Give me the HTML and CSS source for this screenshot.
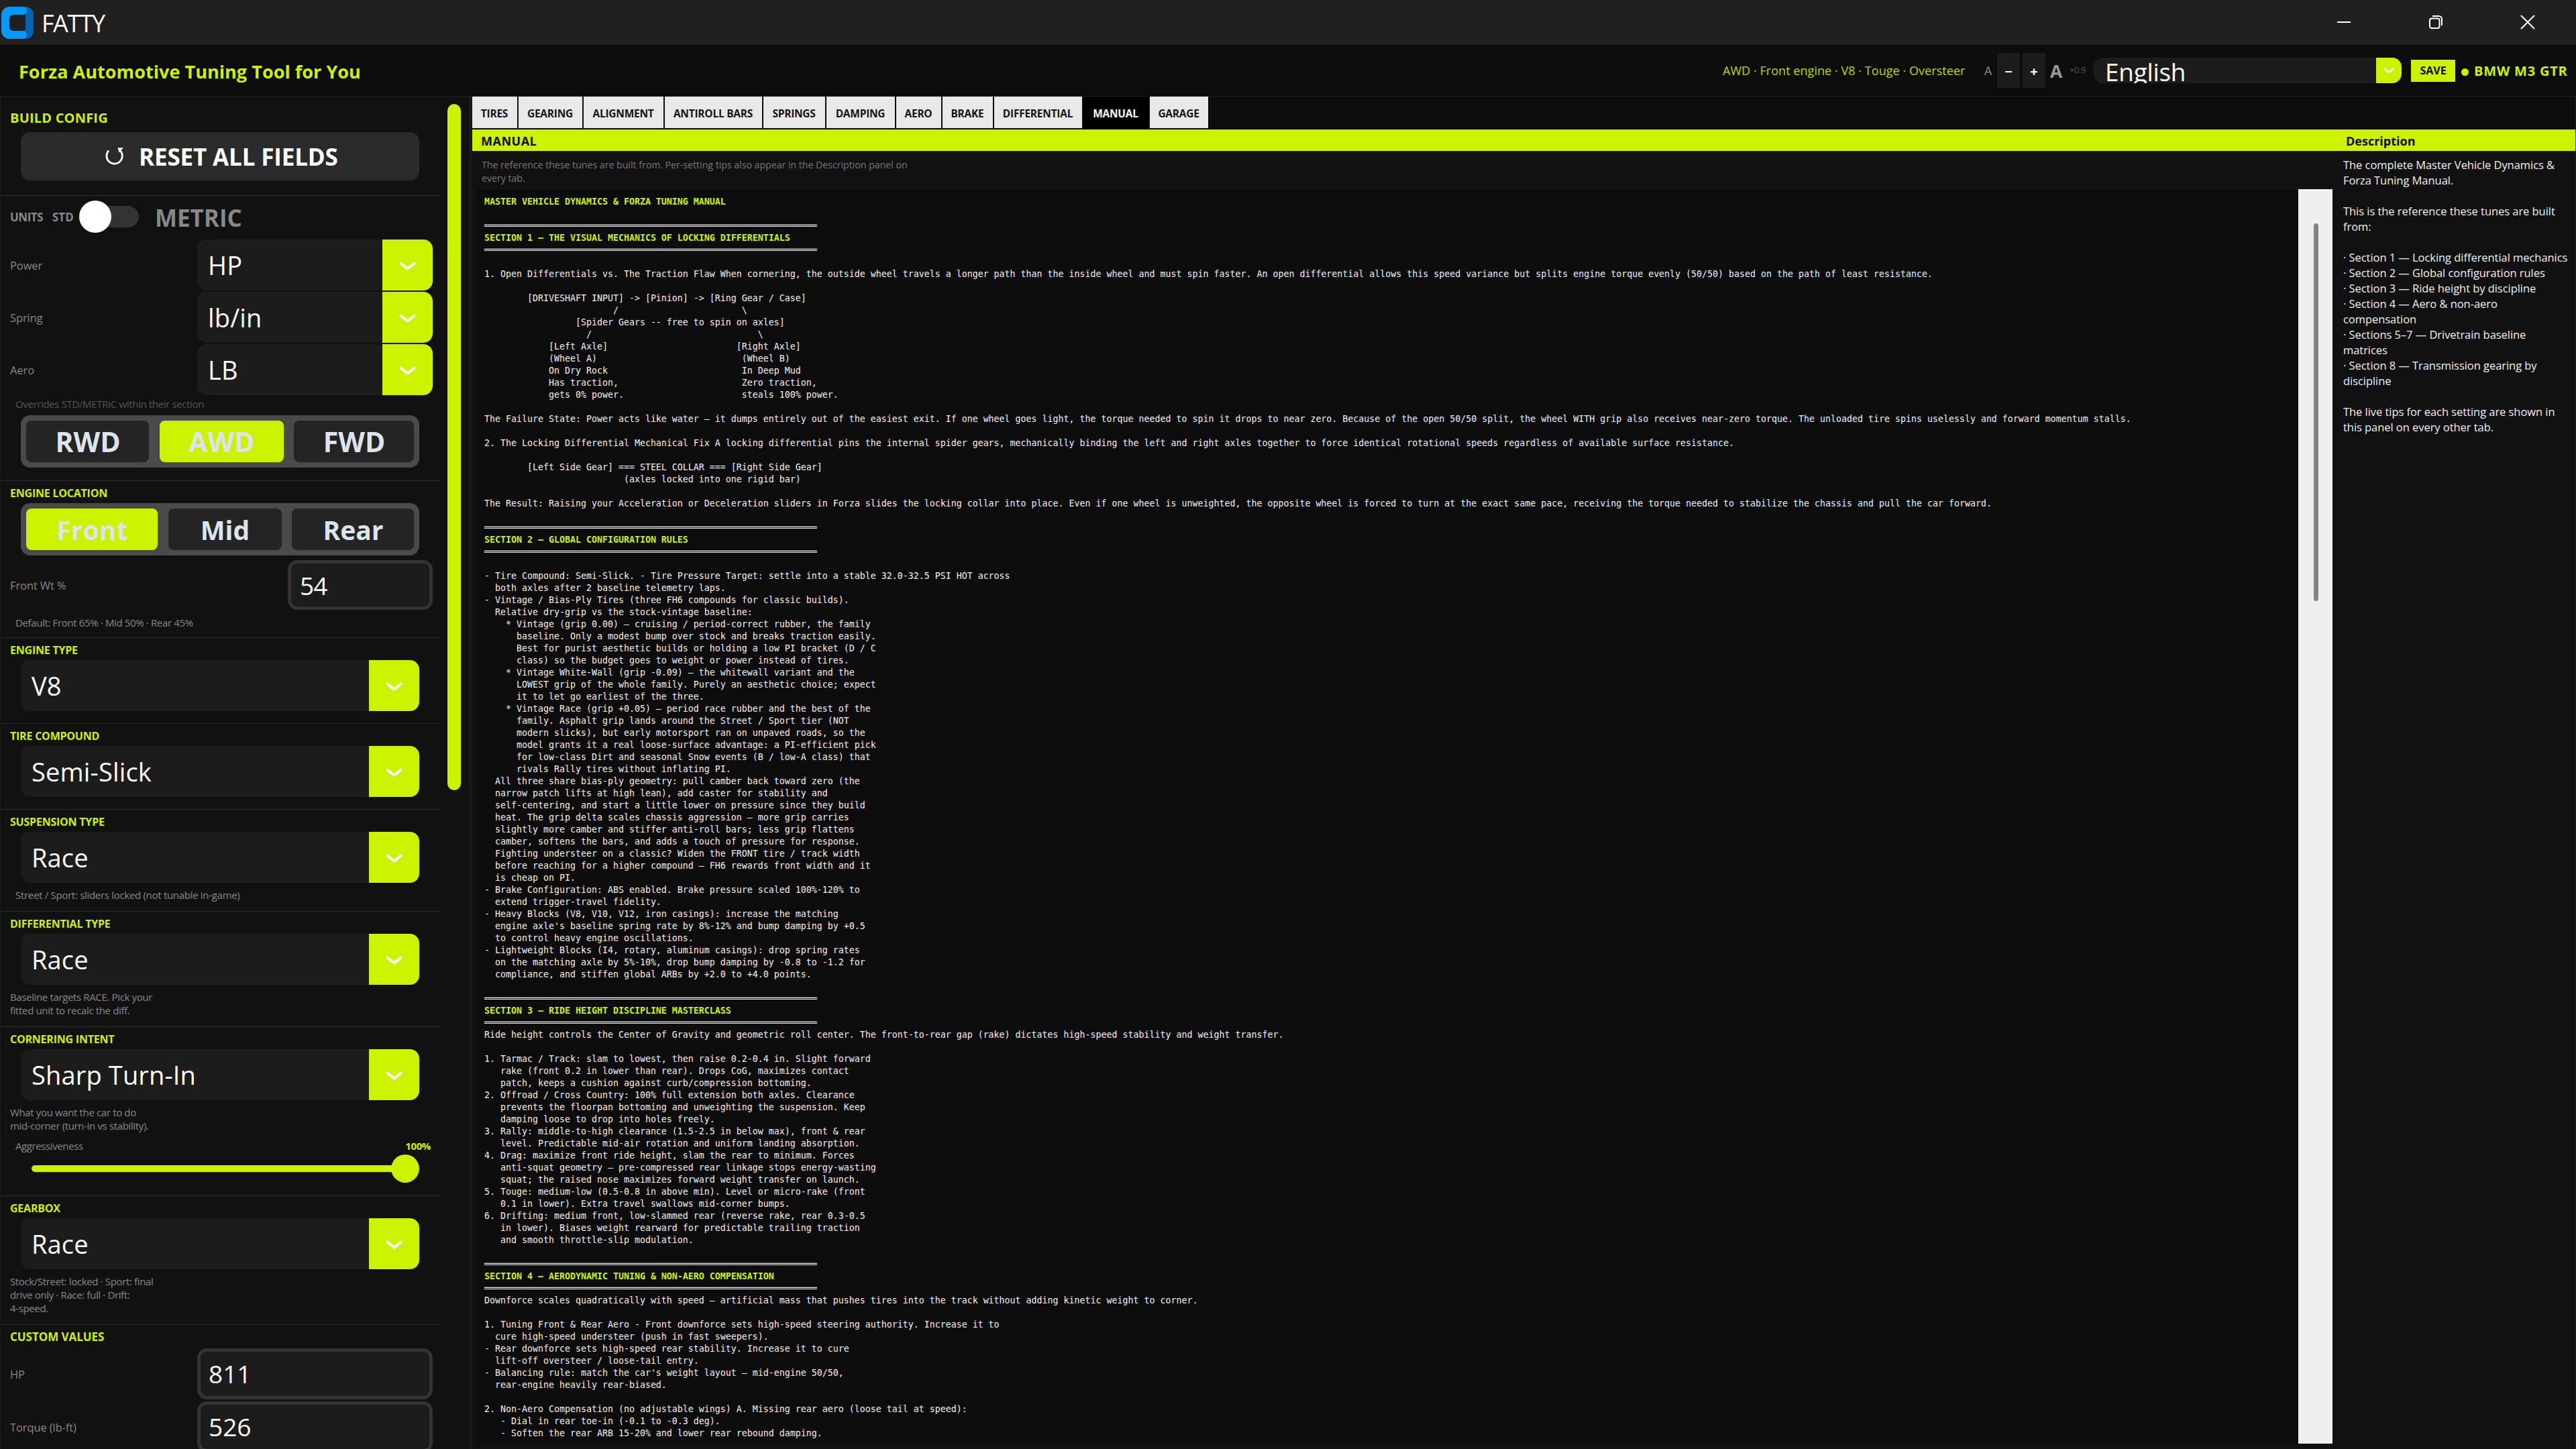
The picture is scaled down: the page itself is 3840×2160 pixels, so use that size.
FILE: index.html
```html
<!DOCTYPE html>
<html lang="en">
<head>
<meta charset="utf-8">
<title>FATTY</title>
<link rel="stylesheet" href="styles.css">
</head>
<body>
<svg class="defs" width="0" height="0" aria-hidden="true">
  <symbol id="chevron" viewBox="0 0 26 14">
    <path d="M2.700 2.700 L13 11 L23.300 2.700" fill="none" stroke="#fff" stroke-width="4.400" stroke-linecap="round" stroke-linejoin="round"/>
    <circle cx="3.200" cy="3.200" r="1" fill="#d8f34a"/>
    <circle cx="22.800" cy="3.200" r="1" fill="#d8f34a"/>
    <circle cx="13" cy="10.800" r="1.300" fill="#d8f34a"/>
  </symbol>
</svg>
<div class="window">
  <div class="titlebar">
    <svg class="logo" viewBox="0 0 48 48">
      <path d="M34 0 H36 A12 12 0 0 1 48 12 V36 A12 12 0 0 1 36 48 H30 V36 H32 A4 4 0 0 0 36 32 V12 Z" fill="#0063b1"/>
      <path d="M12 0 H32 A6 6 0 0 1 38 6 A6 6 0 0 1 32 12 H18 A6 6 0 0 0 12 18 V30 A6 6 0 0 0 18 36 H32 A6 6 0 0 1 38 42 A6 6 0 0 1 32 48 H12 A12 12 0 0 1 0 36 V12 A12 12 0 0 1 12 0 Z" fill="#0a97fb"/>
    </svg>
    <span class="app-name">FATTY</span>
    <div class="window-buttons">
      <svg viewBox="0 0 22 22"><path d="M1 11 H21" stroke="#fff" stroke-width="2"/></svg>
      <svg viewBox="0 0 22 22" fill="none" stroke="#fff" stroke-width="2"><rect x="2" y="5.500" width="14.500" height="14.500" rx="3"/><path d="M6 2 H15.500 A4.500 4.500 0 0 1 20 6.500 V16"/></svg>
      <svg viewBox="0 0 22 22"><path d="M1 1 L21 21 M21 1 L1 21" stroke="#fff" stroke-width="2"/></svg>
    </div>
  </div>

  <header class="header">
    <h1 class="brand">Forza Automotive Tuning Tool for You</h1>
    <span class="status">AWD · Front engine · V8 · Touge · Oversteer</span>
    <span class="font-small">A</span>
    <button class="font-btn">−</button>
    <button class="font-btn">+</button>
    <span class="font-large">A</span>
    <span class="font-scale">×0.9</span>
    <div class="language"><span class="language-value">English</span><span class="language-arrow"><svg class="chev-small"><use href="#chevron"/></svg></span></div>
    <button class="save">SAVE</button>
    <span class="dot"></span>
    <span class="car">BMW M3 GTR</span>
  </header>

  <div class="workspace">
    <aside class="sidebar">
      <div class="panel">
        <section class="group g-build">
          <h2 class="head head-lg">BUILD CONFIG</h2>
          <button class="reset">
            <svg viewBox="0 0 28 28"><path d="M5 5.500 A11.700 11.700 0 1 0 21.500 4.800" fill="none" stroke="#fff" stroke-width="2.700"/><path d="M18.500 1.200 H27 L20.500 8.600 Z" fill="#fff"/></svg>
            <span>RESET ALL FIELDS</span>
          </button>
        </section>

        <section class="group g-units">
          <div class="units">
            <span class="units-label">UNITS</span>
            <span class="std-label">STD</span>
            <span class="toggle"><span class="toggle-knob"></span></span>
            <span class="metric-label">METRIC</span>
          </div>
          <div class="field unit-field"><span class="label">Power</span><div class="combo"><span class="combo-value">HP</span><span class="combo-arrow"><svg class="chev"><use href="#chevron"/></svg></span></div></div>
          <div class="field unit-field"><span class="label">Spring</span><div class="combo"><span class="combo-value">lb/in</span><span class="combo-arrow"><svg class="chev"><use href="#chevron"/></svg></span></div></div>
          <div class="field unit-field"><span class="label">Aero</span><div class="combo"><span class="combo-value">LB</span><span class="combo-arrow"><svg class="chev"><use href="#chevron"/></svg></span></div></div>
          <p class="note note-dim">Overrides STD/METRIC within their section</p>
          <div class="segments seg-drive">
            <button class="seg">RWD</button><button class="seg on">AWD</button><button class="seg">FWD</button>
          </div>
        </section>

        <section class="group g-location">
          <h2 class="head">ENGINE LOCATION</h2>
          <div class="segments seg-engine">
            <button class="seg on">Front</button><button class="seg">Mid</button><button class="seg">Rear</button>
          </div>
          <div class="field weight-field"><span class="label">Front Wt %</span><div class="entry entry-short">54</div></div>
          <p class="note note-default">Default: Front 65% · Mid 50% · Rear 45%</p>
        </section>

        <section class="group g-plain">
          <h2 class="head">ENGINE TYPE</h2>
          <div class="combo wide"><span class="combo-value">V8</span><span class="combo-arrow"><svg class="chev"><use href="#chevron"/></svg></span></div>
        </section>

        <section class="group g-plain">
          <h2 class="head">TIRE COMPOUND</h2>
          <div class="combo wide"><span class="combo-value">Semi-Slick</span><span class="combo-arrow"><svg class="chev"><use href="#chevron"/></svg></span></div>
        </section>

        <section class="group g-suspension">
          <h2 class="head">SUSPENSION TYPE</h2>
          <div class="combo wide"><span class="combo-value">Race</span><span class="combo-arrow"><svg class="chev"><use href="#chevron"/></svg></span></div>
          <p class="note note-below note-in">Street / Sport: sliders locked (not tunable in-game)</p>
        </section>

        <section class="group g-diff">
          <h2 class="head">DIFFERENTIAL TYPE</h2>
          <div class="combo wide"><span class="combo-value">Race</span><span class="combo-arrow"><svg class="chev"><use href="#chevron"/></svg></span></div>
          <p class="note note-below">Baseline targets RACE. Pick your<br>fitted unit to recalc the diff.</p>
        </section>

        <section class="group g-corner">
          <h2 class="head">CORNERING INTENT</h2>
          <div class="combo wide"><span class="combo-value">Sharp Turn-In</span><span class="combo-arrow"><svg class="chev"><use href="#chevron"/></svg></span></div>
          <p class="note note-below">What you want the car to do<br>mid-corner (turn-in vs stability).</p>
          <div class="aggr"><span>Aggressiveness</span><b>100%</b></div>
          <div class="slider"><span class="slider-track"></span><span class="slider-knob"></span></div>
        </section>

        <section class="group g-gearbox">
          <h2 class="head">GEARBOX</h2>
          <div class="combo wide"><span class="combo-value">Race</span><span class="combo-arrow"><svg class="chev"><use href="#chevron"/></svg></span></div>
          <p class="note note-below">Stock/Street: locked · Sport: final<br>drive only · Race: full · Drift:<br>4-speed.</p>
        </section>

        <section class="group g-custom">
          <h2 class="head head-md">CUSTOM VALUES</h2>
          <div class="field custom-field"><span class="label">HP</span><div class="entry">811</div></div>
          <div class="field custom-field"><span class="label">Torque (lb-ft)</span><div class="entry">526</div></div>
        </section>
      </div>
      <div class="side-scroll"><span class="side-thumb"></span></div>
    </aside>

    <main class="main">
      <nav class="tabs">
        <a class="tab">TIRES</a><a class="tab">GEARING</a><a class="tab">ALIGNMENT</a><a class="tab">ANTIROLL BARS</a><a class="tab">SPRINGS</a><a class="tab">DAMPING</a><a class="tab">AERO</a><a class="tab">BRAKE</a><a class="tab">DIFFERENTIAL</a><a class="tab active">MANUAL</a><a class="tab">GARAGE</a>
      </nav>
      <div class="strip"><h2 class="strip-title">MANUAL</h2><h2 class="strip-desc">Description</h2></div>
      <div class="content">
        <article class="manual">
          <p class="intro">The reference these tunes are built from. Per-setting tips also appear in the Description panel on<br>every tab.</p>
          <div class="reader">
<pre class="text"><b>MASTER VEHICLE DYNAMICS &amp; FORZA TUNING MANUAL</b>

══════════════════════════════════════════════════════════════
<b>SECTION 1 — THE VISUAL MECHANICS OF LOCKING DIFFERENTIALS</b>
══════════════════════════════════════════════════════════════

1. Open Differentials vs. The Traction Flaw When cornering, the outside wheel travels a longer path than the inside wheel and must spin faster. An open differential allows this speed variance but splits engine torque evenly (50/50) based on the path of least resistance.

        [DRIVESHAFT INPUT] -&gt; [Pinion] -&gt; [Ring Gear / Case]
                        /                       \
                 [Spider Gears -- free to spin on axles]
                   /                               \
            [Left Axle]                        [Right Axle]
            (Wheel A)                           (Wheel B)
            On Dry Rock                         In Deep Mud
            Has traction,                       Zero traction,
            gets 0% power.                      steals 100% power.

The Failure State: Power acts like water — it dumps entirely out of the easiest exit. If one wheel goes light, the torque needed to spin it drops to near zero. Because of the open 50/50 split, the wheel WITH grip also receives near-zero torque. The unloaded tire spins uselessly and forward momentum stalls.

2. The Locking Differential Mechanical Fix A locking differential pins the internal spider gears, mechanically binding the left and right axles together to force identical rotational speeds regardless of available surface resistance.

        [Left Side Gear] === STEEL COLLAR === [Right Side Gear]
                          (axles locked into one rigid bar)

The Result: Raising your Acceleration or Deceleration sliders in Forza slides the locking collar into place. Even if one wheel is unweighted, the opposite wheel is forced to turn at the exact same pace, receiving the torque needed to stabilize the chassis and pull the car forward.

══════════════════════════════════════════════════════════════
<b>SECTION 2 — GLOBAL CONFIGURATION RULES</b>
══════════════════════════════════════════════════════════════

- Tire Compound: Semi-Slick. - Tire Pressure Target: settle into a stable 32.0-32.5 PSI HOT across
  both axles after 2 baseline telemetry laps.
- Vintage / Bias-Ply Tires (three FH6 compounds for classic builds).
  Relative dry-grip vs the stock-vintage baseline:
    * Vintage (grip 0.00) — cruising / period-correct rubber, the family
      baseline. Only a modest bump over stock and breaks traction easily.
      Best for purist aesthetic builds or holding a low PI bracket (D / C
      class) so the budget goes to weight or power instead of tires.
    * Vintage White-Wall (grip -0.09) — the whitewall variant and the
      LOWEST grip of the whole family. Purely an aesthetic choice; expect
      it to let go earliest of the three.
    * Vintage Race (grip +0.05) — period race rubber and the best of the
      family. Asphalt grip lands around the Street / Sport tier (NOT
      modern slicks), but early motorsport ran on unpaved roads, so the
      model grants it a real loose-surface advantage: a PI-efficient pick
      for low-class Dirt and seasonal Snow events (B / low-A class) that
      rivals Rally tires without inflating PI.
  All three share bias-ply geometry: pull camber back toward zero (the
  narrow patch lifts at high lean), add caster for stability and
  self-centering, and start a little lower on pressure since they build
  heat. The grip delta scales chassis aggression — more grip carries
  slightly more camber and stiffer anti-roll bars; less grip flattens
  camber, softens the bars, and adds a touch of pressure for response.
  Fighting understeer on a classic? Widen the FRONT tire / track width
  before reaching for a higher compound — FH6 rewards front width and it
  is cheap on PI.
- Brake Configuration: ABS enabled. Brake pressure scaled 100%-120% to
  extend trigger-travel fidelity.
- Heavy Blocks (V8, V10, V12, iron casings): increase the matching
  engine axle's baseline spring rate by 8%-12% and bump damping by +0.5
  to control heavy engine oscillations.
- Lightweight Blocks (I4, rotary, aluminum casings): drop spring rates
  on the matching axle by 5%-10%, drop bump damping by -0.8 to -1.2 for
  compliance, and stiffen global ARBs by +2.0 to +4.0 points.

══════════════════════════════════════════════════════════════
<b>SECTION 3 — RIDE HEIGHT DISCIPLINE MASTERCLASS</b>
══════════════════════════════════════════════════════════════
Ride height controls the Center of Gravity and geometric roll center. The front-to-rear gap (rake) dictates high-speed stability and weight transfer.

1. Tarmac / Track: slam to lowest, then raise 0.2-0.4 in. Slight forward
   rake (front 0.2 in lower than rear). Drops CoG, maximizes contact
   patch, keeps a cushion against curb/compression bottoming.
2. Offroad / Cross Country: 100% full extension both axles. Clearance
   prevents the floorpan bottoming and unweighting the suspension. Keep
   damping loose to drop into holes freely.
3. Rally: middle-to-high clearance (1.5-2.5 in below max), front &amp; rear
   level. Predictable mid-air rotation and uniform landing absorption.
4. Drag: maximize front ride height, slam the rear to minimum. Forces
   anti-squat geometry — pre-compressed rear linkage stops energy-wasting
   squat; the raised nose maximizes forward weight transfer on launch.
5. Touge: medium-low (0.5-0.8 in above min). Level or micro-rake (front
   0.1 in lower). Extra travel swallows mid-corner bumps.
6. Drifting: medium front, low-slammed rear (reverse rake, rear 0.3-0.5
   in lower). Biases weight rearward for predictable trailing traction
   and smooth throttle-slip modulation.

══════════════════════════════════════════════════════════════
<b>SECTION 4 — AERODYNAMIC TUNING &amp; NON-AERO COMPENSATION</b>
══════════════════════════════════════════════════════════════
Downforce scales quadratically with speed — artificial mass that pushes tires into the track without adding kinetic weight to corner.

1. Tuning Front &amp; Rear Aero - Front downforce sets high-speed steering authority. Increase it to
  cure high-speed understeer (push in fast sweepers).
- Rear downforce sets high-speed rear stability. Increase it to cure
  lift-off oversteer / loose-tail entry.
- Balancing rule: match the car's weight layout — mid-engine 50/50,
  rear-engine heavily rear-biased.

2. Non-Aero Compensation (no adjustable wings) A. Missing rear aero (loose tail at speed):
   - Dial in rear toe-in (-0.1 to -0.3 deg).
   - Soften the rear ARB 15-20% and lower rear rebound damping.</pre>
            <div class="reader-scroll"><span class="reader-thumb"></span></div>
          </div>
        </article>
        <aside class="description">
          <p>The complete Master Vehicle Dynamics &amp;<br>Forza Tuning Manual.</p>
          <p>This is the reference these tunes are built<br>from:</p>
          <p>· Section 1 — Locking differential mechanics<br>· Section 2 — Global configuration rules<br>· Section 3 — Ride height by discipline<br>· Section 4 — Aero &amp; non-aero<br>compensation<br>· Sections 5–7 — Drivetrain baseline<br>matrices<br>· Section 8 — Transmission gearing by<br>discipline</p>
          <p>The live tips for each setting are shown in<br>this panel on every other tab.</p>
        </aside>
      </div>
    </main>
  </div>
</div>
</body>
</html>
```
FILE: styles.css
```css
* { box-sizing: border-box; }
html, body { margin: 0; background: #0c0c0c; }
body {
  font-family: "Open Sans", "Noto Sans", sans-serif;
  color: #fff;
  overflow: hidden;
}
h1, h2, p, pre { margin: 0; font-weight: inherit; font-size: inherit; }
button { border: 0; padding: 0; margin: 0; font: inherit; color: inherit; background: none; }
.defs { display: none; }

.window { width: 3840px; height: 2160px; display: flex; flex-direction: column; overflow: hidden; }

/* window title bar */
.titlebar { height: 67px; flex: none; background: #202020; display: flex; align-items: center; padding-left: 2px; }
.logo { width: 48px; height: 48px; flex: none; }
.app-name { margin-left: 12px; padding-top: 3px; font-size: 36px; line-height: 48px; letter-spacing: -1.500px; }
.window-buttons { margin-left: auto; display: flex; gap: 115px; padding-right: 61px; padding-bottom: 2px; }
.window-buttons svg { width: 22px; height: 22px; }

/* application header */
.header { height: 77px; flex: none; display: flex; align-items: center; padding-left: 28px; border-bottom: 1px solid #1f1f1f; }
.brand { font-weight: 700; font-size: 27px; color: #ccf200; letter-spacing: .05px; padding-top: 2px; }
.status { margin-left: auto; width: 390px; font-size: 18px; color: #ccf200; letter-spacing: .05px; opacity: .88; white-space: nowrap; }
.font-small { width: 19px; font-size: 18px; color: #888; }
.font-btn { width: 34px; height: 52px; margin-right: 4px; padding-top: 3px; background: #1c1c1c; font-weight: 700; font-size: 20px; }
.font-btn + .font-btn { margin-right: 7px; }
.font-large { width: 29px; padding-top: 2px; font-weight: 700; font-size: 26.500px; color: #999; }
.font-scale { width: 36px; padding-bottom: 2px; font-size: 13px; letter-spacing: -.4px; color: #555; }
.language { width: 459px; height: 38px; display: flex; border-radius: 14px; overflow: hidden; background: #1c1c1c; }
.language-value { flex: 1; padding-left: 17px; font-size: 37px; line-height: 41px; letter-spacing: -.3px; }
.language-arrow { width: 38px; display: flex; align-items: center; justify-content: center; background: #ccf200; }
.save { width: 66px; height: 33px; margin-left: 14px; background: #ccf200; color: #0c0c0c; font-weight: 700; font-size: 16px; }
.dot { width: 11px; height: 11px; margin: 4px 8px 0 9px; border-radius: 50%; background: #ccf200; }
.car { width: 152px; font-weight: 700; font-size: 20px; letter-spacing: .8px; color: #ccf200; white-space: nowrap; padding-top: 1px; }

.chev { width: 25px; height: 13.500px; }
.chev-small { width: 16px; height: 8.600px; }

.workspace { flex: 1; display: flex; min-height: 0; }

/* sidebar */
.sidebar { width: 704px; flex: none; display: flex; background: #111; border-left: 1px solid #1a1a1a; border-right: 5px solid #1a1a1a; overflow: hidden; }
.panel { width: 655px; flex: none; }
.group { border-bottom: 1px solid #2e2e2e; padding-top: 7px; }
.g-build { height: 148px; padding-top: 18px; }
.g-units { height: 425px; padding-top: 6px; }
.g-location { height: 234px; }
.g-plain { height: 128px; }
.g-suspension { height: 152px; }
.g-diff { height: 172px; }
.g-corner { height: 252px; }
.g-gearbox { height: 192px; }
.g-custom { border: 0; }

.head { height: 22px; line-height: 22px; margin-left: 14px; margin-bottom: 4px; font-weight: 700; font-size: 16px; letter-spacing: -.22px; color: #ccf200; }
.head-lg { height: 28px; line-height: 28px; margin-bottom: 7px; font-size: 20px; letter-spacing: .2px; }
.head-md { margin-bottom: 6px; font-size: 17px; letter-spacing: -.05px; }

.reset { width: 594px; height: 72px; margin-left: 30px; display: flex; align-items: center; padding-left: 126px; border-radius: 14px; background: #2a2a2a; font-weight: 700; font-size: 35px; letter-spacing: -.15px; }
.reset svg { width: 28px; height: 28px; margin-right: 22px; }

.units { height: 50px; display: flex; align-items: center; padding-left: 14px; margin-bottom: 9px; font-weight: 700; font-size: 17px; color: #888; }
.units-label { width: 62px; letter-spacing: -.5px; }
.std-label { width: 41px; padding-left: 1px; }
.toggle { position: relative; width: 89px; height: 48px; margin-right: 24px; display: flex; align-items: center; }
.toggle::before { content: ""; position: absolute; left: 6px; right: 0; top: 8px; height: 32px; border-radius: 16px; background: #333; }
.toggle-knob { position: relative; width: 48px; height: 48px; border-radius: 50%; background: #fff; }
.metric-label { font-size: 35px; padding-top: 2px; }

.field { display: flex; align-items: center; justify-content: space-between; padding: 0 11px 0 14px; }
.label { font-size: 16.500px; color: #888; letter-spacing: -.1px; }
.unit-field { height: 76px; margin-bottom: 2px; }

.combo { width: 351px; height: 76px; display: flex; border-radius: 14px; overflow: hidden; background: #1c1c1c; }
.combo-value { flex: 1; padding-left: 16px; font-size: 38px; line-height: 77px; letter-spacing: .15px; white-space: nowrap; }
.combo-arrow { width: 75px; padding-top: 3px; display: flex; align-items: center; justify-content: center; background: #ccf200; }
.wide { width: 594px; margin-left: 30px; }

.note { margin-left: 14px; font-size: 15px; line-height: 20px; letter-spacing: -.36px; color: #888; white-space: nowrap; }
.note-dim { margin: 3px 0 7px 22px; color: #555; }
.note-default { margin: 9px 0 0 22px; }
.note-below { margin-top: 8px; }
.note-in { margin-left: 22px; letter-spacing: -.3px; }

.segments { width: 594px; height: 78px; margin-left: 30px; padding: 8px; display: grid; border-radius: 14px; background: #4a4a4a; font-weight: 700; font-size: 39px; color: #dce4ee; }
.seg-drive { grid-template-columns: 183px 185px 179px; justify-content: space-between; font-size: 41px; }
.seg-engine { grid-template-columns: 196px 169px 182px; justify-content: space-between; letter-spacing: -.8px; }
.seg { height: 62px; border-radius: 8px; background: #242424; line-height: 63px; padding-left: 1px; }
.on { background: #ccf200; }

.weight-field { height: 74px; margin-top: 7px; }
.entry { width: 351px; height: 76px; border: 5px solid #333; border-radius: 14px; background: #1c1c1c; padding-left: 12px; font-size: 37px; line-height: 66px; }
.entry-short { width: 216px; height: 74px; padding-left: 13px; line-height: 65px; letter-spacing: -1px; }
.custom-field { height: 76px; margin-bottom: 3px; }

.aggr { height: 20px; margin: 10px 14px 3px 22px; display: flex; justify-content: space-between; font-size: 15px; line-height: 20px; letter-spacing: -.4px; color: #888; }
.aggr b { color: #ccf200; }
.slider { height: 42px; margin-left: 46px; width: 578px; display: flex; align-items: center; }
.slider-track { flex: 1; height: 10px; margin-right: -6px; border-radius: 5px; background: #ccf200; }
.slider-knob { width: 42px; height: 42px; border-radius: 50%; background: #ccf200; }

.side-scroll { padding: 11px 0 0 11px; }
.side-thumb { display: block; width: 20px; height: 1023px; border-radius: 10px; background: #ccf200; }

/* main area */
.main { flex: 1; min-width: 0; display: flex; flex-direction: column; border-right: 1px solid #1a1a1a; }
.tabs { height: 49px; display: grid; flex: none; grid-template-columns: 67px 95px 119px 145px 92px 102px 67px 75px 131px 97px 87px; gap: 2px; padding-bottom: 2px; background: #0c0c0c; }
.tab { display: flex; align-items: center; justify-content: center; padding: 3px 1px 0 0; background: #e8e8e8; color: #141414; font-weight: 700; font-size: 15.500px; letter-spacing: -.25px; white-space: nowrap; }
.active { background: #000; color: #fff; }
.strip { height: 32px; flex: none; display: flex; background: #ccf200; color: #0c0c0c; font-weight: 700; font-size: 18px; line-height: 35px; }
.strip-title { width: 2793px; padding-left: 13px; letter-spacing: .5px; }

.content { flex: 1; min-height: 0; display: flex; background: #111; }
.manual { width: 2773px; display: flex; flex-direction: column; }
.intro { height: 57px; flex: none; padding: 11px 0 0 14px; font-size: 14.200px; line-height: 20px; letter-spacing: -.03px; color: #777; }
.reader { height: 1870px; display: flex; justify-content: space-between; margin-left: 7px; background: #0c0c0c; overflow: hidden; }
.text { padding: 10px 0 0 11px; font-family: "DejaVu Sans Mono", monospace; font-size: 13.290px; line-height: 18px; color: #f2f2f2; }
.text b { color: #ccf200; }
.reader-scroll { width: 51px; flex: none; background: #f0f0f0; padding: 51px 0 0 23px; }
.reader-thumb { display: block; width: 7px; height: 563px; border-radius: 4px; background: #858585; }

.description { padding: 9px 0 0 16px; font-size: 16.500px; line-height: 23px; letter-spacing: -.05px; color: #f2f2f2; white-space: nowrap; }
.description p + p { margin-top: 23px; }
```
